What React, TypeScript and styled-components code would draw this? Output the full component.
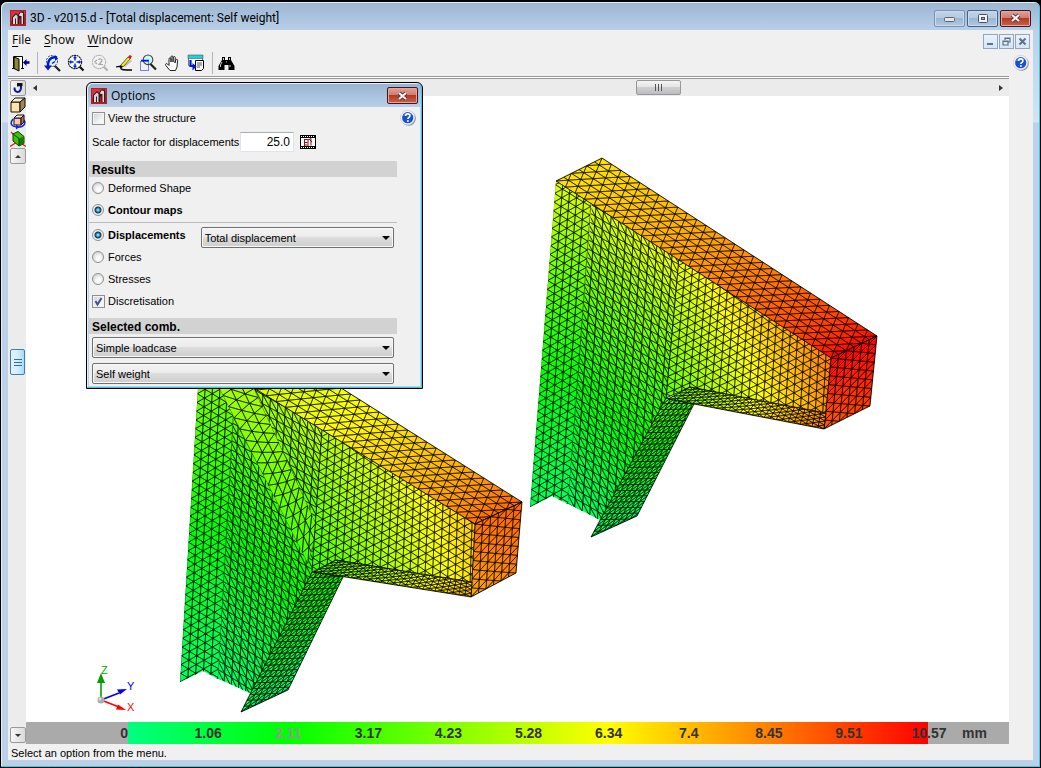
import React from "react";
import styled, { createGlobalStyle, css } from "styled-components";

const ui = `"Open Sans", "Noto Sans", sans-serif`;
const caption = `Roboto, "Open Sans", sans-serif`;
const small = `"Liberation Sans", Arial, sans-serif`;

const GlobalStyle = createGlobalStyle`
  * { box-sizing: border-box; }
  body { margin: 0; background: #000; font-family: ${small}; font-size: 11px; color: #000; }
  button, input, select { font: inherit; color: inherit; margin: 0; padding: 0; }
  svg { display: block; }
`;

/* ---------- window frame ---------- */

const Frame = styled.div`
  position: relative;
  display: flex;
  flex-direction: column;
  min-height: 100vh;
  padding: 0 7px 7px 6px;
  background: linear-gradient(#9ab5d2, #bad1e9 30px, #d5e3f3 120px, #bad1e9 121px);
  border: solid #000;
  border-width: 2px 1px 1px;
  border-radius: 7px 7px 0 0;
  box-shadow: inset -1px -1px 0 #2fd0e6, inset 1px 1px 0 #e4eef8;
`;

const TitleBar = styled.header`
  display: flex;
  align-items: center;
  height: 28px;
  padding: 4px 2px 0 3px;
  gap: 4px;
`;

const Title = styled.h1`
  flex: 1;
  margin: 0;
  font: 400 12px/16px ${caption};
  white-space: nowrap;
`;

const CaptionButtons = styled.div`
  display: flex;
  gap: 2px;
`;

const CaptionButton = styled.button<{ $close?: boolean; $faded?: boolean }>`
  display: grid;
  place-items: center;
  width: 31px;
  height: 17px;
  border: 1px solid ${(p) => (p.$close ? "#431422" : p.$faded ? "#7b92b1" : "#4c617e")};
  border-radius: 2px;
  box-shadow: inset 0 0 0 1px ${(p) => (p.$close ? "#e3a69c" : "#c8dbee")};
  background: ${(p) =>
    p.$close
      ? "linear-gradient(#e0a196, #cf7b6c 48%, #b53921 50%, #c8634c)"
      : "linear-gradient(#c0d4e9, #b3cae2 48%, #9bb6d3 50%, #afc9e3)"};
`;

const Client = styled.div`
  display: flex;
  flex: 1;
  flex-direction: column;
  margin-left: 1px;
  background: #f0f0f0;
`;

const MenuBar = styled.nav`
  display: flex;
  height: 20px;
  align-items: center;
  padding: 0 3px 0 4px;
  gap: 13px;
  font: 12px/20px ${ui};
`;

const MenuItem = styled.button`
  border: 0;
  background: none;
  line-height: 20px;
  u { text-underline-offset: 2px; }
`;

const MdiButtons = styled.div`
  display: flex;
  gap: 1px;
  margin: 3px 0 0 auto;
`;

const MdiButton = styled.button`
  display: grid;
  place-items: center;
  width: 15px;
  height: 15px;
  border: 1px solid #93a5bd;
  background: linear-gradient(#eaf2fb, #d6e5f5);
`;

const ToolBar = styled.div`
  display: flex;
  height: 26px;
  align-items: center;
  padding: 0 4px 0 1px;
`;

const ToolButton = styled.button`
  display: grid;
  place-items: center;
  width: 24px;
  height: 24px;
  border: 0;
  background: none;
`;

const Separator = styled.span`
  width: 7px;
  height: 22px;
  background: linear-gradient(#b4b4b4, #b4b4b4) 4px 0 / 1px 100% no-repeat;
`;

const HelpButton = styled.button`
  margin-left: auto;
  border: 0;
  background: none;
`;

const Workspace = styled.main`
  display: flex;
  flex: 1;
  margin-right: 24px;
  border-top: 1px solid #989898;
`;

const SideBar = styled.aside`
  display: flex;
  flex-direction: column;
  align-items: center;
  width: 18px;
  padding: 2px 0 1px 1px;
  gap: 1px;
  border-top: 1px solid #fff;
  background: #ececec;
  box-shadow: inset 0 1px 0 #989898;
`;

const SideButton = styled.button<{ $framed?: boolean }>`
  display: grid;
  place-items: center;
  width: 16px;
  height: 16px;
  ${(p) =>
    p.$framed
      ? css`
          border: 1px solid #9a9a9a;
          border-radius: 2px;
          background: linear-gradient(90deg, #f6f6f6, #dadada);
        `
      : css`
          border: 0;
          background: none;
        `}
`;

const VerticalTrack = styled.div`
  display: grid;
  flex: 1;
  grid-template-rows: 185fr 26px 353fr;
  width: 15px;
`;

const VerticalThumb = styled.div`
  display: grid;
  place-items: center;
  grid-row: 2;
  border: 1px solid #3c7fb1;
  border-radius: 2px;
  background: linear-gradient(90deg, #e3f4fc, #d6eefb 50%, #a9dbf5);
`;

const View = styled.section`
  display: flex;
  flex: 1;
  flex-direction: column;
  min-width: 0;
  border-top: 1px solid #fff;
  background: #fff;
`;

const ScrollBar = styled.div`
  display: flex;
  height: 18px;
  padding-top: 1px;
  border-top: 1px solid #989898;
  background: #ebebeb;
`;

const ScrollArrow = styled.button`
  display: grid;
  place-items: center;
  width: 17px;
  border: 0;
  background: none;
`;

const HorizontalTrack = styled.div`
  display: grid;
  flex: 1;
  grid-template-columns: 593fr 45px 311fr;
`;

const HorizontalThumb = styled.div`
  display: grid;
  place-items: center;
  grid-column: 2;
  height: 15px;
  border: 1px solid #979797;
  border-radius: 2px;
  background: linear-gradient(#f4f4f4, #e4e4e4 48%, #cfcfcf 50%, #bdbdc2);
`;

const Scene = styled.svg`
  flex: 1;
  width: 100%;
  height: 0;
  min-height: 400px;
`;

const Scale = styled.div`
  display: flex;
  align-items: center;
  height: 22px;
  padding: 0 22px 0 62px;
  font: 700 14px/22px ${small};
  color: #333;
  background: linear-gradient(
    90deg,
    #aaa 102px,
    #00ff80 102px,
    #00ff00 calc(102px + (100% - 183px) * 0.2),
    #ffff00 calc(102px + (100% - 183px) * 0.6),
    #ff0000 calc(100% - 81px),
    #aaa calc(100% - 81px)
  );
`;

const ScaleValues = styled.ol`
  display: grid;
  flex: 1;
  grid-template-columns: repeat(11, 1fr);
  margin: 0 -7px 0 0;
  padding: 0;
  list-style: none;
  text-align: center;
`;

const ScaleValue = styled.li<{ $edge?: boolean; $dim?: boolean }>`
  padding-right: ${(p) => (p.$edge ? 8 : 0)}px;
  color: ${(p) => (p.$dim ? "#8f9a8f" : "inherit")};
`;

const StatusBar = styled.footer`
  height: 16px;
  padding: 2px 0 0 3px;
  line-height: 14px;
`;

/* ---------- options dialog ---------- */

const Dialog = styled.section`
  position: absolute;
  top: 80px;
  left: 85px;
  width: 337px;
  padding: 1px 2px 2px;
  border: 1px solid #000;
  border-radius: 6px 6px 0 0;
  background: linear-gradient(#98b3d0, #b9d1ea 25px);
  box-shadow: inset -1px -1px 0 #3fc8e4, inset 1px 1px 0 #e6eff8;
`;

const DialogTitleBar = styled.header`
  display: flex;
  align-items: center;
  height: 23px;
  padding: 0 2px;
  gap: 4px;
`;

const DialogTitle = styled.h2`
  flex: 1;
  margin: 0;
  font: 400 12px/16px ${ui};
`;

const DialogBody = styled.form`
  display: flex;
  flex-direction: column;
  padding: 0 23px 0 0;
  background: #f0f0f0;
`;

const Field = styled.div<{ $tall?: boolean; $ruled?: boolean }>`
  display: flex;
  align-items: center;
  height: ${(p) => (p.$tall ? 26 : p.$ruled ? 24 : 22)}px;
  padding-left: 3px;
  margin-top: ${(p) => (p.$ruled ? 1 : 0)}px;
  border-top: ${(p) => (p.$ruled ? "1px solid #bcbcbc" : "0")};
`;

const FieldHelp = styled(HelpButton)`
  margin-right: -19px;
`;

const Choice = styled.label<{ $bold?: boolean }>`
  display: flex;
  align-items: center;
  gap: 3px;
  font-weight: ${(p) => (p.$bold ? 700 : 400)};
`;

const Radio = styled.input.attrs({ type: "radio" })`
  appearance: none;
  width: 12px;
  height: 12px;
  margin-right: 1px;
  border: 1px solid #8e8f8f;
  border-radius: 50%;
  background: radial-gradient(circle at 60% 65%, #fdfdfd 20%, #d3d6da 75%);
  &:checked {
    background: radial-gradient(circle, #7fd6f3 0 1px, #1b6f9d 2px, #123a58 3px, #f1f1f1 4px);
  }
`;

const Tick = styled.input.attrs({ type: "checkbox" })`
  appearance: none;
  grid-area: 1 / 1;
  width: 13px;
  height: 13px;
  border: 1px solid #8e8f8f;
  background: linear-gradient(135deg, #cbcfd5, #f6f6f6 70%);
  box-shadow: inset 0 0 0 1px #f4f4f4;
  & + svg { visibility: hidden; }
  &:checked + svg { visibility: visible; }
`;

const Stack = styled.span`
  display: grid;
  align-items: center;
  > svg { grid-area: 1 / 1; pointer-events: none; }
`;

const FactorLabel = styled.label`
  width: 142px;
  white-space: nowrap;
`;

const NumberBox = styled.input`
  width: 54px;
  height: 20px;
  margin: 0 6px;
  padding-right: 3px;
  border: 1px solid #e2e3ea;
  border-top-color: #abadb3;
  background: #fff;
  text-align: right;
  font-size: 12px;
`;

const IconButton = styled.button`
  border: 0;
  background: none;
`;

const Band = styled.h3`
  height: 16px;
  margin: 6px 0 0;
  padding-left: 3px;
  background: #d2d2d2;
  font-size: 12px;
  line-height: 18px;
`;

const DropWrap = styled(Stack)<{ $inline?: boolean }>`
  flex: 1;
  margin: ${(p) => (p.$inline ? "6px 3px 0 15px" : "3px 3px 2px 3px")};
  > svg { justify-self: end; margin-right: 4px; }
`;

const Drop = styled.select`
  appearance: none;
  grid-area: 1 / 1;
  width: 100%;
  height: 21px;
  padding: 1px 0 0 3px;
  border: 1px solid #707070;
  border-radius: 2px;
  background: linear-gradient(#f3f3f3, #ebebeb 48%, #dcdcdc 50%, #cecece);
  box-shadow: inset 0 0 0 1px #f8f8f8;
`;

/* ---------- icons ---------- */

const Logo = () => (
  <svg width="16" height="16" viewBox="0 0 16 16">
    <rect width="16" height="16" fill="#b01c28" />
    <path d="M1 1h14v3L8 6 1 11z" fill="#dc323d" />
    <path d="M2 7l4-4 2 2 2-3.500h4V14h-3.500V8L9 9v5H2z" fill="#3a1a1e" />
    <path d="M3 7.500l3-3 1.500 1.500V14H6V8L5 9v5H3zM9 5l1.500-2.500 2.500.5v11h-1.500V6H9.500z" fill="#d8d8d8" />
    <path d="M.5.5h15v15H.5z" fill="none" stroke="#b31c29" />
  </svg>
);

const CloseGlyph = () => (
  <svg width="13" height="10" viewBox="0 0 13 10">
    <path d="M3 2l7 6M10 2L3 8" stroke="#56343a" strokeWidth="4" />
    <path d="M3 2l7 6M10 2L3 8" stroke="#f4f1f1" strokeWidth="2.2" />
  </svg>
);

const HelpIcon = () => (
  <svg width="16" height="16" viewBox="0 0 16 16">
    <circle cx="8.5" cy="8.5" r="7.3" fill="#8a8d92" />
    <circle cx="7.6" cy="7.6" r="7.3" fill="#f1f3f6" stroke="#c4c8cf" strokeWidth=".6" />
    <circle cx="7.7" cy="7.7" r="5.6" fill="#1650d8" />
    <path d="M3 6a5 5 0 0 1 9-1q-4 0-9 1z" fill="#4f86f2" />
    <path d="M5.6 6.1c0-3 4.4-2.8 4.3-.2 0 1.5-2 1.5-2 3.1" fill="none" stroke="#fff" strokeWidth="1.6" />
    <circle cx="7.9" cy="11" r="1" fill="#fff" />
  </svg>
);

const lens = (stroke: string, fill: string) => (
  <>
    <path d="M11.5 11.5l5 5" stroke={stroke} strokeWidth="2.2" />
    <circle cx="8" cy="8" r="6.600" fill={fill} stroke={stroke} strokeWidth="1.1" strokeDasharray="2 .5" />
  </>
);

const icons: Record<string, React.ReactNode> = {
  exit: (
    <>
      <path d="M1.5 14.5v-12h9v12M0 14.5h3M9 14.5h3" fill="#fff" stroke="#000" />
      <path d="M2 3l5 2v12l-5-2.500z" fill="#8c8a2c" stroke="#000" />
      <path d="M17.500 8.500h-4" stroke="#000080" strokeWidth="2.500" />
      <path d="M11 8.500l3.500-3.500v7z" fill="#000080" />
    </>
  ),
  redraw: (
    <>
      <path d="M11 11l6 6" stroke="#222" strokeWidth="2.200" />
      <circle cx="9" cy="7" r="5.500" fill="#dffbff" stroke="#444" strokeDasharray="2 1" />
      <path d="M5 13C4.500 6 8 2 14 3.500" fill="none" stroke="#0018d8" strokeWidth="2.400" />
      <path d="M1 11.500h8l-4 5z" fill="#0018d8" />
      <path d="M12 1v6l3-2.500z" fill="#0018d8" />
      <path d="M9 9.500l3-2" stroke="#0018d8" strokeWidth="1.500" />
    </>
  ),
  extents: (
    <>
      {lens("#111", "#f4feff")}
      <path d="M8 3v3.500M8 9.500v3.500M3 8h3.500M9.500 8h3.500" stroke="#0018d8" strokeWidth="1.400" />
      <path d="M8 1.800l2 2.400H6zM8 14.200L6 11.800h4zM1.800 8L4.200 6v4zM14.200 8L11.800 6v4z" fill="#0018d8" />
    </>
  ),
  previous: (
    <>
      {lens("#b0b0b0", "#f3f3f3")}
      <path d="M3.500 8l2.500-2M3.500 8l2.500 2M7.500 6c1-2 4-1 3.500 1L8 10.500h4" fill="none" stroke="#a4a4a4" strokeWidth="1.200" />
    </>
  ),
  pencil: (
    <>
      <path d="M1 13c3-1 6-1 5 1s5 2 11 2" fill="none" stroke="#000" strokeWidth="1.300" />
      <path d="M9.500 12.500l7-6" stroke="#bbb" strokeWidth="1.600" />
      <path d="M6 11l7-8 2.500 1.500-7 8-3 .5z" fill="#f5e62a" stroke="#3c3a12" strokeWidth=".8" />
      <path d="M12.800 3.500l1.700-2.500 2.500 1-1.500 3z" fill="#d61f1f" />
      <path d="M4.500 14l1-3 2.500 2z" fill="#000" />
    </>
  ),
  region: (
    <>
      <path d="M11 9.500l6 6" stroke="#222" strokeWidth="2.200" />
      <circle cx="9" cy="5.800" r="4.800" fill="#c8f8fb" stroke="#444" strokeWidth="1.100" />
      <path d="M1.500 7.500h8v9h-8z" fill="none" stroke="#0018d8" strokeDasharray="1 1" />
      <path d="M2 6.500h8" stroke="#0018d8" strokeWidth="1.500" />
    </>
  ),
  pan: (
    <path
      d="M7 16.500L2.800 11.500C2 10 3.300 9 4.500 10l1.500 1.500V5c0-1.500 1.800-1.500 2 0V8 3c0-1.500 2-1.500 2 0V8l.3-4.500c.2-1.400 2-1.200 2 .2L12 9l.8-3c.5-1.200 2-.8 1.800.5L14 13l-1.500 3.500z"
      fill="#fff"
      stroke="#222"
      strokeWidth="1"
    />
  ),
  windows: (
    <>
      <path d="M1.500 1.500h14v10h-14z" fill="#fff" stroke="#777" />
      <path d="M1 1h15v3.500H1z" fill="#12d5e4" stroke="#555" strokeWidth=".6" />
      <path d="M8.500 6.500h8v8l-2 2h-6z" fill="#fff" stroke="#000" />
      <path d="M10 9h5M10 11h5M10 13h3" stroke="#555" />
      <path d="M3.500 6v6h3" fill="none" stroke="#0018d8" strokeWidth="2.200" />
      <path d="M5.500 9l4 3.500-4 4z" fill="#0018d8" />
    </>
  ),
  find: (
    <>
      <path d="M4 3h3v3h3V3h3v3l3.500 6v4H10.500v-5h-4v5H.5v-4L4 6z" fill="#000" />
      <path d="M2.500 13v-2l1.500-3M12 13v-2M5.500 4v2M11.500 4v2M8 8h1" stroke="#fff" strokeWidth=".8" />
    </>
  ),
};

const ToolIcon = ({ name }: { name: string }) => (
  <svg width="18" height="18" viewBox="0 0 18 18">
    {icons[name]}
  </svg>
);

const CubeIcon = ({ kind }: { kind: "solid" | "orbit" | "section" }) => (
  <svg width="16" height="16" viewBox="0 0 16 16">
    {kind === "solid" && (
      <g stroke="#111" strokeWidth="1" strokeLinejoin="round">
        <path d="M1 5h9v10H1z" fill="#ffe2a4" />
        <path d="M1 5l4-4h10l-5 4z" fill="#fff1ce" />
        <path d="M10 5l5-4v9l-5 5z" fill="#a28653" />
      </g>
    )}
    {kind === "orbit" && (
      <>
        <path d="M3 5c-4 5-1 8 5 8s9-4 5-8" fill="none" stroke="#1028d4" strokeWidth="1.500" />
        <g stroke="#111" strokeLinejoin="round">
          <path d="M4 4h7v7H4z" fill="#ffc4b4" />
          <path d="M4 4l3-3h7l-3 3z" fill="#ffe3d8" />
          <path d="M11 4l3-3v7l-3 3z" fill="#b9705f" />
        </g>
        <path d="M6 10.500v5L9.500 13z" fill="#1028d4" />
      </>
    )}
    {kind === "section" && (
      <>
        <path d="M0 15.500l8-5 8 5M1 1l4 4" fill="none" stroke="#e11" strokeWidth="1.200" />
        <path d="M3 3l5-2.500 6 5v7l-5 2.500-6-5z" fill="#3fc400" stroke="#123c05" />
        <path d="M9 7.500l5-2v7l-5 2.500z" fill="#1b7a04" />
        <path d="M3 3l6 4.500v7" fill="none" stroke="#123c05" />
      </>
    )}
  </svg>
);

const Arrow = ({ d }: { d: string }) => (
  <svg width="8" height="8" viewBox="0 0 8 8">
    <path d={d} fill="#333" />
  </svg>
);

const Film = () => (
  <svg width="16" height="14" viewBox="0 0 16 14">
    <rect width="16" height="14" />
    <path d="M1 3h14v8H1z" fill="#fff" />
    <path d="M1 1.500h14M1 12.500h14" stroke="#fff" strokeDasharray="1 1" />
    <path d="M4.500 11V4.500M4 4.500h4M4 7.500h3.500M4 10h3.500M8 11V5l3-1.500v7M9 4l3 3" fill="none" stroke="#8b1020" />
  </svg>
);

/* ---------- finite element model ---------- */

type Pt = [number, number];
type Patch = {
  /* corners: start, end of first row, end of last row, start of last row */
  quad: [Pt, Pt, Pt, Pt];
  values: [number, number, number, number];
  columns: number;
  rows: number;
  bend?: number;
  clip?: Pt[];
  seamless?: boolean;
};

const stops: [number, number[]][] = [
  [0, [0, 255, 128]],
  [2.11, [0, 255, 0]],
  [6.34, [255, 255, 0]],
  [10.57, [255, 0, 0]],
];

function contourColour(value: number) {
  const v = Math.max(0, Math.min(10.57, value));
  let i = 0;
  while (i < stops.length - 2 && v > stops[i + 1][0]) i++;
  const [a, ca] = stops[i];
  const [b, cb] = stops[i + 1];
  const t = (v - a) / (b - a);
  return `rgb(${ca.map((c, k) => Math.round(c + (cb[k] - c) * t)).join(",")})`;
}

const blend = (c: number[], u: number, v: number) =>
  (c[0] * (1 - u) + c[1] * u) * (1 - v) + (c[3] * (1 - u) + c[2] * u) * v;

/* Splits a four-sided face into columns of triangles, odd columns staggered by half a row. */
function triangulate({ quad, values, columns, rows, bend = 1 }: Patch) {
  const xs = quad.map((p) => p[0]);
  const ys = quad.map((p) => p[1]);
  const grid = Array.from({ length: columns + 1 }, (_, i) => {
    const steps =
      i % 2 === 0
        ? Array.from({ length: rows + 1 }, (_, j) => j)
        : [0, ...Array.from({ length: rows }, (_, j) => j + 0.5), rows];
    return steps.map((s) => {
      const u = i / columns;
      const v = s / rows;
      return { s, x: blend(xs, u, v), y: blend(ys, u, v), val: blend(values, u, 1 - Math.pow(1 - v, bend)) };
    });
  });
  const fills: { d: string; fill: string }[] = [];
  for (let i = 0; i < columns; i++) {
    const left = grid[i];
    const right = grid[i + 1];
    let a = 0;
    let b = 0;
    while (a < left.length - 1 || b < right.length - 1) {
      const stepLeft =
        b === right.length - 1 || (a < left.length - 1 && left[a + 1].s + left[a].s <= right[b + 1].s + right[b].s);
      const tri = stepLeft ? [left[a], right[b], left[a + 1]] : [left[a], right[b], right[b + 1]];
      if (stepLeft) a++;
      else b++;
      fills.push({
        d: "M" + tri.map((p) => `${p.x.toFixed(1)} ${p.y.toFixed(1)}`).join("L") + "Z",
        fill: contourColour((tri[0].val + tri[1].val + tri[2].val) / 3),
      });
    }
  }
  return fills;
}

const polygon = (pts: Pt[]) => pts.map((p) => p.join(",")).join(" ");

function Face({ patch, id }: { patch: Patch; id: string }) {
  const triangles = triangulate(patch);
  const outline = patch.clip ?? patch.quad;
  return (
    <g>
      <clipPath id={id}>
        <polygon points={polygon(outline)} />
      </clipPath>
      <g clipPath={`url(#${id})`}>
        {triangles.map((t, i) => (
          <path key={i} d={t.d} fill={t.fill} stroke={t.fill} strokeWidth="0.600" />
        ))}
        <path d={triangles.map((t) => t.d).join("")} fill="none" stroke="#000" strokeWidth="0.550" />
      </g>
      {!patch.seamless && <polygon points={polygon(outline)} fill="none" stroke="#000" strokeWidth="0.800" />}
    </g>
  );
}

const rightCorbel: Patch[] = [
  {
    quad: [[592, 150], [680, 256], [654, 608], [567, 503]],
    values: [6.8, 6.2, 0.2, 0.6],
    columns: 12, rows: 40, bend: 1.3,
    clip: [[592, 203], [679, 257], [668, 398], [602, 521], [567, 503]],
    seamless: true,
  },
  {
    quad: [[556, 176], [593, 176], [568, 507], [530, 507]],
    values: [5.9, 6.2, 0.6, 0.7],
    columns: 5, rows: 38, bend: 1.4,
    clip: [[556, 181], [593, 204], [568, 504], [552, 496], [530, 507]],
    seamless: true,
  },
  {
    quad: [[679, 257], [838, 272], [829, 435], [664, 419]],
    values: [6.1, 9.1, 8, 3.2],
    columns: 22, rows: 19,
    clip: [[679, 257], [832, 358], [826, 415], [690, 387], [666, 398]],
  },
  {
    quad: [[556, 181], [602, 158], [877, 336], [831, 358]],
    values: [6.8, 6.8, 10.57, 10.5],
    columns: 6, rows: 29, bend: 0.6,
  },
  {
    quad: [[831, 358], [877, 336], [870, 406], [824, 429]],
    values: [10.57, 10.57, 9.6, 9],
    columns: 6, rows: 8,
  },
  {
    quad: [[666, 398], [712, 377], [637, 516], [591, 537]],
    values: [3.6, 3.6, 0.6, 0.8],
    columns: 7, rows: 24, bend: 1.2,
    clip: [[666, 398], [694, 404], [637, 516], [591, 537]],
  },
  {
    quad: [[690, 387], [826, 413], [824, 429], [668, 399]],
    values: [4.2, 8.2, 8.6, 3.8],
    columns: 26, rows: 4,
  },
];

const leftCorbel: Patch[] = [
  {
    quad: [[236, 325], [323, 428], [299, 783], [217, 678]],
    values: [5.6, 5.4, 0.1, 0.5],
    columns: 12, rows: 40, bend: 1.4,
    clip: [[236, 376], [322, 428], [314, 572], [252, 694], [217, 678]],
    seamless: true,
  },
  {
    quad: [[200, 350], [237, 350], [218, 682], [180, 682]],
    values: [4.8, 4.9, 0.5, 0.6],
    columns: 5, rows: 38, bend: 1.3,
    clip: [[200, 355], [237, 377], [218, 679], [203, 671], [180, 682]],
    seamless: true,
  },
  {
    quad: [[217, 384], [252, 384], [318, 528], [308, 564]],
    values: [4.8, 5, 3.8, 3.3],
    columns: 3, rows: 16,
    seamless: true,
  },
  {
    quad: [[322, 428], [482, 441], [477, 605], [310, 592]],
    values: [5.2, 7.8, 6.8, 2.8],
    columns: 22, rows: 19,
    clip: [[322, 428], [476, 524], [473, 583], [336, 560], [312, 572]],
  },
  {
    quad: [[200, 355], [246, 328], [522, 502], [475, 524]],
    values: [5, 5, 8.9, 8.7],
    columns: 6, rows: 29, bend: 0.75,
  },
  {
    quad: [[475, 524], [522, 502], [516, 573], [471, 597]],
    values: [8.7, 8.9, 8.4, 7.8],
    columns: 6, rows: 8,
  },
  {
    quad: [[312, 572], [358, 550], [288, 690], [241, 712]],
    values: [2.9, 2.9, 0.4, 0.6],
    columns: 7, rows: 24, bend: 1.2,
    clip: [[312, 572], [343, 577], [288, 690], [241, 712]],
  },
  {
    quad: [[336, 560], [472, 582], [471, 597], [314, 572]],
    values: [3.8, 7, 7.6, 3.4],
    columns: 26, rows: 4,
  },
];

const Axes = () => (
  <g strokeWidth="1.600" fontFamily={small} fontSize="11">
    <path d="M101 700V680" stroke="#00a000" />
    <path d="M101 673l4 10h-8z" fill="#00a000" />
    <path d="M101 700l18-7" stroke="#0000f0" />
    <path d="M127 689l-10 .5 3 5z" fill="#0000f0" />
    <path d="M101 700l18 7" stroke="#f00" />
    <path d="M126 710l-8-5.500-2 5z" fill="#f00" />
    <circle cx="101" cy="700" r="3.500" fill="#aaa" />
    <circle cx="100" cy="699" r="1.500" fill="#ddd" />
    <text x="101" y="674" fill="#00b400">Z</text>
    <text x="127" y="690" fill="#0000f0">Y</text>
    <text x="127" y="711" fill="#f00">X</text>
  </g>
);

/* ---------- page ---------- */

const DropDown = ({ label, value, inline }: { label: string; value: string; inline?: boolean }) => (
  <DropWrap $inline={inline}>
    <Drop aria-label={label} defaultValue={value}>
      <option>{value}</option>
    </Drop>
    <svg width="8" height="4" viewBox="0 0 8 4">
      <path d="M0 0h8L4 4z" />
    </svg>
  </DropWrap>
);

const CheckBox = ({ label, checked }: { label: string; checked?: boolean }) => (
  <Choice>
    <Stack>
      <Tick defaultChecked={checked} />
      <svg width="13" height="13" viewBox="0 0 13 13">
        <path d="M3.500 6l2 3.500L9.500 3" fill="none" stroke="#3c5496" strokeWidth="2" />
      </svg>
    </Stack>
    {label}
  </Choice>
);

const tools = [
  ["redraw", "Redraw"],
  ["extents", "Zoom extents"],
  ["previous", "Previous view"],
  ["pencil", "Draw"],
  ["region", "Zoom window"],
  ["pan", "Pan"],
  ["windows", "Print view"],
];

const scale = ["0", "1.06", "2.11", "3.17", "4.23", "5.28", "6.34", "7.4", "8.45", "9.51", "10.57"];

export default function App() {
  return (
    <>
      <GlobalStyle />
      <Frame>
        <TitleBar>
          <Logo />
          <Title>3D - v2015.d - [Total displacement: Self weight]</Title>
          <CaptionButtons>
            <CaptionButton $faded aria-label="Minimise">
              <svg width="12" height="8" viewBox="0 0 12 8">
                <rect x=".5" y="3.500" width="10" height="4" rx="1" fill="#e6e6e6" stroke="#5b6470" />
              </svg>
            </CaptionButton>
            <CaptionButton aria-label="Restore">
              <svg width="12" height="9" viewBox="0 0 12 9">
                <rect x="1.500" y=".5" width="9" height="8" rx="1" fill="#f4f4f4" stroke="#4b5064" />
                <rect x="4.500" y="3.500" width="3" height="2" fill="#8fb0d0" stroke="#4b5064" />
              </svg>
            </CaptionButton>
            <CaptionButton $close aria-label="Close">
              <CloseGlyph />
            </CaptionButton>
          </CaptionButtons>
        </TitleBar>
        <Client>
          <MenuBar>
            <MenuItem><u>F</u>ile</MenuItem>
            <MenuItem><u>S</u>how</MenuItem>
            <MenuItem><u>W</u>indow</MenuItem>
            <MdiButtons>
              <MdiButton aria-label="Minimise view">
                <svg width="9" height="9" viewBox="0 0 9 9"><path d="M1 7h6" stroke="#5f7189" strokeWidth="2" /></svg>
              </MdiButton>
              <MdiButton aria-label="Restore view">
                <svg width="9" height="9" viewBox="0 0 9 9">
                  <path d="M3 3V1h5v4H6M1 4h5v4H1zM1 4.500h5M3 1.500h5" fill="none" stroke="#5f7189" strokeWidth="1.200" />
                </svg>
              </MdiButton>
              <MdiButton aria-label="Close view">
                <svg width="9" height="9" viewBox="0 0 9 9"><path d="M1.500 1.500l6 6M7.500 1.500l-6 6" stroke="#5f7189" strokeWidth="2" /></svg>
              </MdiButton>
            </MdiButtons>
          </MenuBar>
          <ToolBar>
            <ToolButton aria-label="Exit"><ToolIcon name="exit" /></ToolButton>
            <Separator />
            {tools.map(([name, label]) => (
              <ToolButton key={name} aria-label={label}><ToolIcon name={name} /></ToolButton>
            ))}
            <Separator />
            <ToolButton aria-label="Find"><ToolIcon name="find" /></ToolButton>
            <HelpButton aria-label="Help"><HelpIcon /></HelpButton>
          </ToolBar>
          <Workspace>
            <SideBar>
              <SideButton $framed aria-label="Rotate">
                <svg width="14" height="14" viewBox="0 0 14 14">
                  <path d="M3.500 6.500C3 12.500 10.500 12.500 10 6V4" fill="none" stroke="#0b1c8c" strokeWidth="2" />
                  <path d="M6 5.500V2h5.500v3z" fill="#111" />
                </svg>
              </SideButton>
              <SideButton aria-label="Solid view"><CubeIcon kind="solid" /></SideButton>
              <SideButton aria-label="Orbit"><CubeIcon kind="orbit" /></SideButton>
              <SideButton aria-label="Section"><CubeIcon kind="section" /></SideButton>
              <SideButton $framed aria-label="Scroll up"><Arrow d="M1 6h6L4 3z" /></SideButton>
              <VerticalTrack>
                <VerticalThumb>
                  <svg width="8" height="8" viewBox="0 0 8 8">
                    <path d="M0 1.500h8M0 4.500h8M0 7.500h8" stroke="#336f9c" />
                  </svg>
                </VerticalThumb>
              </VerticalTrack>
              <SideButton $framed aria-label="Scroll down"><Arrow d="M1 3h6L4 6z" /></SideButton>
            </SideBar>
            <View>
              <ScrollBar>
                <ScrollArrow aria-label="Scroll left"><Arrow d="M6 1v6L2 4z" /></ScrollArrow>
                <HorizontalTrack>
                  <HorizontalThumb>
                    <svg width="8" height="7" viewBox="0 0 8 7">
                      <path d="M.5 0v7M3.500 0v7M6.500 0v7" stroke="#555" />
                    </svg>
                  </HorizontalThumb>
                </HorizontalTrack>
                <ScrollArrow aria-label="Scroll right"><Arrow d="M2 1v6l4-3z" /></ScrollArrow>
              </ScrollBar>
              <Scene viewBox="26 96 983 626" role="img" aria-label="Total displacement contour map">
                {leftCorbel.map((p, i) => <Face key={i} patch={p} id={`left-${i}`} />)}
                {rightCorbel.map((p, i) => <Face key={i} patch={p} id={`right-${i}`} />)}
                <Axes />
              </Scene>
              <Scale>
                <ScaleValues>
                  {scale.map((s, i) => (
                    <ScaleValue key={s} $edge={i === 0} $dim={i === 2}>{s}</ScaleValue>
                  ))}
                </ScaleValues>
                mm
              </Scale>
            </View>
          </Workspace>
          <StatusBar>Select an option from the menu.</StatusBar>
        </Client>

        <Dialog role="dialog" aria-label="Options">
          <DialogTitleBar>
            <Logo />
            <DialogTitle>Options</DialogTitle>
            <CaptionButton $close aria-label="Close options"><CloseGlyph /></CaptionButton>
          </DialogTitleBar>
          <DialogBody>
            <Field>
              <CheckBox label="View the structure" />
              <FieldHelp type="button" aria-label="Help on options"><HelpIcon /></FieldHelp>
            </Field>
            <Field $tall>
              <FactorLabel htmlFor="factor">Scale factor for displacements</FactorLabel>
              <NumberBox id="factor" defaultValue="25.0" />
              <IconButton type="button" aria-label="Animate"><Film /></IconButton>
            </Field>
            <Band>Results</Band>
            <Field><Choice><Radio name="result" />Deformed Shape</Choice></Field>
            <Field><Choice $bold><Radio name="result" defaultChecked />Contour maps</Choice></Field>
            <Field $ruled>
              <Choice $bold><Radio name="map" defaultChecked />Displacements</Choice>
              <DropDown inline label="Displacement" value="Total displacement" />
            </Field>
            <Field><Choice><Radio name="map" />Forces</Choice></Field>
            <Field><Choice><Radio name="map" />Stresses</Choice></Field>
            <Field><CheckBox label="Discretisation" checked /></Field>
            <Band>Selected comb.</Band>
            <DropDown label="Combination" value="Simple loadcase" />
            <DropDown label="Loadcase" value="Self weight" />
          </DialogBody>
        </Dialog>
      </Frame>
    </>
  );
}
